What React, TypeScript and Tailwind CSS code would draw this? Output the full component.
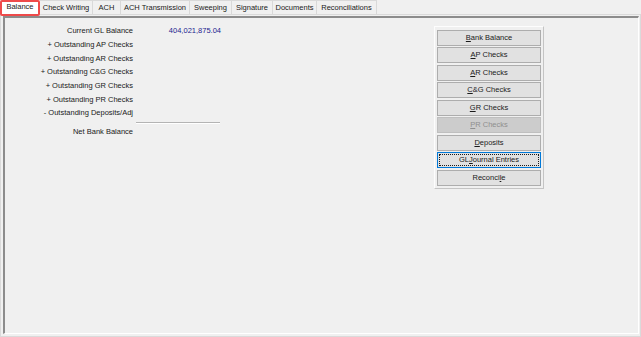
import React from "react";

const tabs = [
  { label: "Balance", w: "w-[40px]", active: true },
  { label: "Check Writing", w: "w-[53px]" },
  { label: "ACH", w: "w-[28px]" },
  { label: "ACH Transmission", w: "w-[69px]" },
  { label: "Sweeping", w: "w-[42px]" },
  { label: "Signature", w: "w-[41px]" },
  { label: "Documents", w: "w-[44px]" },
  { label: "Reconciliations", w: "w-[60px]" },
];

const rows = [
  { label: "Current GL Balance", value: "404,021,875.04" },
  { label: "+ Outstanding AP Checks" },
  { label: "+ Outstanding AR Checks" },
  { label: "+ Outstanding C&G Checks" },
  { label: "+ Outstanding GR Checks" },
  { label: "+ Outstanding PR Checks" },
  { label: "- Outstanding Deposits/Adj" },
];

// [before, mnemonic, after]
const buttons: { parts: [string, string, string]; disabled?: boolean; focused?: boolean }[] = [
  { parts: ["", "B", "ank Balance"] },
  { parts: ["", "A", "P Checks"] },
  { parts: ["", "A", "R Checks"] },
  { parts: ["", "C", "&G Checks"] },
  { parts: ["", "G", "R Checks"] },
  { parts: ["", "P", "R Checks"], disabled: true },
  { parts: ["", "D", "eposits"] },
  { parts: ["GL ", "J", "ournal Entries"], focused: true },
  { parts: ["Reconci", "l", "e"] },
];

const WinButton = ({ parts, disabled, focused }: (typeof buttons)[number]) => (
  <div
    className={
      "flex h-[16px] w-[104px] items-center justify-center border text-[7.5px] leading-none " +
      (disabled
        ? "border-[#bfbfbf] bg-[#cccccc] text-[#8f8f8f]"
        : focused
          ? "border-[#0078d7] bg-[#e1e1e1] text-[#1a1a1a]"
          : "border-[#adadad] bg-[#e1e1e1] text-[#1a1a1a]")
    }
  >
    {focused ? (
      <span className="flex h-[12px] w-[100px] items-center justify-center border border-dotted border-[#1a1a1a]">
        {parts[0]}
        <u className="decoration-[0.5px] underline-offset-1">{parts[1]}</u>
        {parts[2]}
      </span>
    ) : (
      <span>
        {parts[0]}
        <u className="decoration-[0.5px] underline-offset-1">{parts[1]}</u>
        {parts[2]}
      </span>
    )}
  </div>
);

export default function App() {
  return (
    <div
      className="flex h-[337px] w-[641px] flex-col overflow-hidden bg-[#f0f0f0] text-[#1a1a1a]"
      style={{ fontFamily: '"Liberation Sans", Arial, sans-serif' }}
    >
      {/* Tab strip */}
      <div className="relative z-10 flex h-[14px] items-start">
        {tabs.map((t) =>
          t.active ? (
            <div
              key={t.label}
              className={`${t.w} flex h-[16px] items-center justify-center rounded-[2px] border-2 border-[#ef4a4a] bg-white pb-[2px] text-[7.5px] leading-none`}
            >
              {t.label}
            </div>
          ) : (
            <div
              key={t.label}
              className={`${t.w} flex h-[14px] items-center justify-center border border-b-0 border-l-0 border-[#d9d9d9] bg-[#f0f0f0] text-[7.5px] leading-none`}
            >
              {t.label}
            </div>
          ),
        )}
      </div>

      {/* Tab page */}
      <div className="flex flex-1 flex-col border border-[#dadada] bg-[#f0f0f0] pb-[2px] pl-[2px] pr-[1px] pt-[1px]">
        {/* Sunken panel */}
        <div className="flex flex-1 items-start border-b border-l-2 border-r border-t-2 border-b-white border-l-[#8c8c8c] border-r-white border-t-[#8c8c8c]">
          {/* Balance summary */}
          <div className="flex w-[216px] flex-col pt-[6px] text-[7.5px]">
            {rows.map((r) => (
              <div key={r.label} className="flex h-[13.7px] items-center">
                <div className="w-[128px] text-right">{r.label}</div>
                <div className="ml-[3px] w-[85px] text-right text-[#23238f]">{r.value ?? ""}</div>
              </div>
            ))}
            <div className="ml-[131px] mt-[2px] w-[84px] border-b border-t border-b-white border-t-[#b4b4b4]" />
            <div className="flex h-[13.7px] items-center pt-[1px]">
              <div className="w-[128px] text-right">Net Bank Balance</div>
            </div>
          </div>

          {/* Action buttons */}
          <div className="ml-[213px] mt-[8px] flex w-[110px] flex-col items-center gap-[1.5px] border border-b-[#c4c4c4] border-l-[#fdfdfd] border-r-[#c4c4c4] border-t-[#fdfdfd] px-[2px] pb-[2px] pt-[2.5px]">
            {buttons.map((b, i) => (
              <WinButton key={i} {...b} />
            ))}
          </div>
        </div>
      </div>
    </div>
  );
}
